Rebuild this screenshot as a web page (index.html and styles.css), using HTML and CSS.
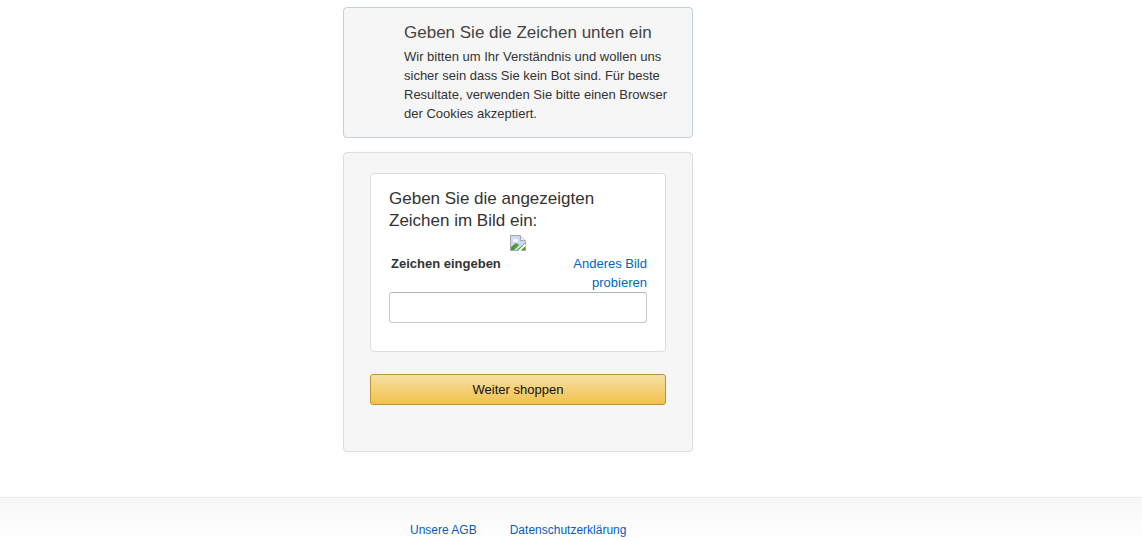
FILE: index.html
```html
<!DOCTYPE html>
<html lang="de">
<head>
    <meta charset="UTF-8">
    <title>Bot Check</title>
    <link rel="stylesheet" href="styles.css">
</head>
<body>
    <main class="page-column">
        <section class="box info-box">
            <h4 class="info-title">Geben Sie die Zeichen unten ein</h4>
            <p class="info-text">Wir bitten um Ihr Verständnis und wollen uns sicher sein dass Sie kein Bot sind. Für beste Resultate, verwenden Sie bitte einen Browser der Cookies akzeptiert.</p>
        </section>
        <section class="box form-box">
            <form autocomplete="off">
                <div class="inner-card">
                    <h4 class="card-title">Geben Sie die angezeigten Zeichen im Bild ein:</h4>
                    <div class="captcha-image">
                        <svg width="16" height="16" viewBox="0 0 16 16">
                            <path d="M0 0H10L16 6V16H0Z" fill="#a8a8a8"/>
                            <path d="M1 1H10V6H15V15H1Z" fill="#c9d9f7"/>
                            <path d="M3 4H8V7H3Z" fill="#f4f7fd"/>
                            <path d="M11 1.5L14.5 5H11Z" fill="#f2f2f2"/>
                            <path d="M1 15V12L6 8L9 10L4 15Z" fill="#4c9a2a"/>
                            <path d="M7 15L15 8V15Z" fill="#4c9a2a"/>
                            <path d="M15.5 9.5L9 16" stroke="#fff" stroke-width="2"/>
                        </svg>
                    </div>
                    <div class="field-head">
                        <label class="field-label" for="captcha">Zeichen eingeben</label>
                        <a class="field-link" href="#">Anderes Bild probieren</a>
                    </div>
                    <input class="field-input" type="text" id="captcha">
                </div>
                <button class="submit-btn" type="submit">Weiter shoppen</button>
            </form>
        </section>
    </main>
    <footer class="site-footer">
        <a href="#">Unsere AGB</a>
        <a href="#">Datenschutzerklärung</a>
    </footer>
</body>
</html>
```

FILE: styles.css
```css
body {
    margin: 0;
    font-family: Arial, 'Liberation Sans', sans-serif;
    font-size: 13px;
    line-height: 19px;
    color: #333;
    background-color: #fff;
    height: 541px;
    overflow: hidden;
}
a {
    color: #0066c0;
    text-decoration: none;
}
.page-column {
    width: 350px;
    margin-left: 343px;
    padding-top: 7px;
}
.box {
    box-sizing: border-box;
    background-color: #f6f6f6;
    border-radius: 4px;
}
.info-box {
    height: 131px;
    padding: 15px 20px 0 60px;
    border: 1px solid #c0d0dc;
    margin-bottom: 14px;
}
.info-title {
    margin: 0 0 4px;
    font-size: 17px;
    line-height: 20px;
    font-weight: 400;
    color: #444;
}
.info-text {
    margin: 0;
}
.form-box {
    height: 300px;
    padding: 20px 26px 0;
    border: 1px solid #ddd;
    box-shadow: 0 0 14px rgba(0,0,0,0.02);
}
.inner-card {
    box-sizing: border-box;
    height: 179px;
    padding: 14px 18px 0;
    background-color: #fff;
    border: 1px solid #ddd;
    border-radius: 4px;
}
.card-title {
    margin: 0;
    font-size: 17px;
    line-height: 22px;
    font-weight: 400;
    color: #333;
}
.captcha-image {
    display: flex;
    justify-content: center;
    height: 16px;
    margin-top: 3px;
}
.field-head {
    display: flex;
    justify-content: space-between;
    margin-top: 3px;
}
.field-label {
    padding-left: 2px;
    font-weight: 700;
}
.field-link {
    width: 110px;
    text-align: right;
}
.field-input {
    display: block;
    box-sizing: border-box;
    width: 258px;
    height: 31px;
    padding: 3px 7px;
    border: 1px solid #c8c8c8;
    border-top-color: #b4b4b4;
    border-radius: 3px;
    background-color: #fff;
}
.submit-btn {
    display: block;
    box-sizing: border-box;
    width: 296px;
    height: 31px;
    margin-top: 22px;
    padding: 0;
    border: 1px solid #c0922f;
    border-radius: 3px;
    background: linear-gradient(to bottom, #f7dfa5, #f0c14b);
    font-family: inherit;
    font-size: 13px;
    color: #111;
}
.site-footer {
    box-sizing: border-box;
    height: 44px;
    margin-top: 45px;
    padding: 23px 0 0 410px;
    display: flex;
    gap: 33px;
    font-size: 12px;
    line-height: 19px;
    border-top: 1px solid #ececec;
    background: linear-gradient(to bottom, #f7f7f7, #fff);
    box-shadow: 0 -1px 2px rgba(0,0,0,0.03);
}
.site-footer a {
    color: #0a5cb5;
}
```
